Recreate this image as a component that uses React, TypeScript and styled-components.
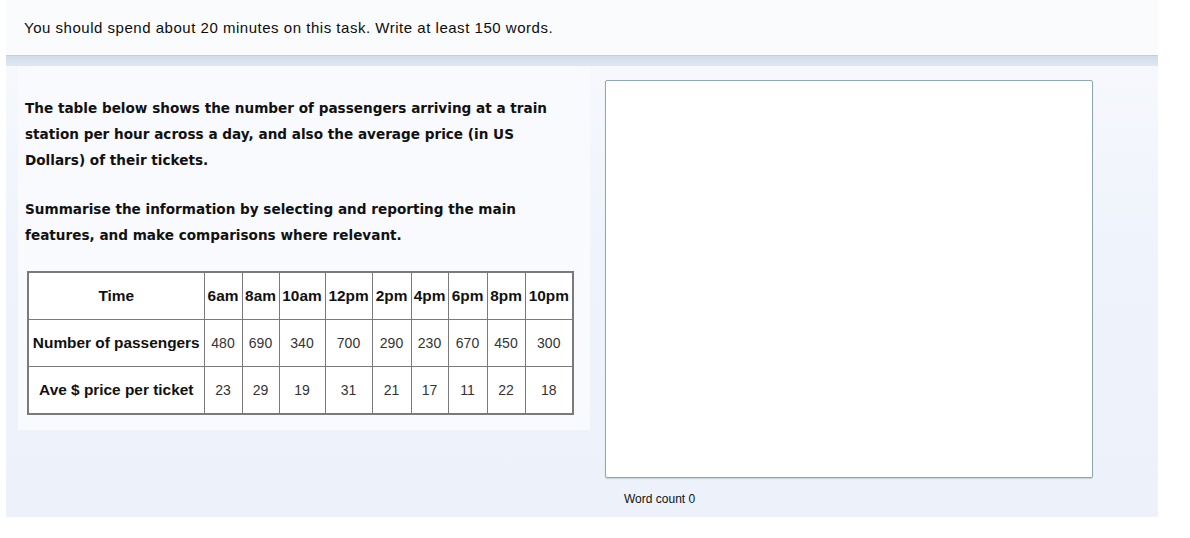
import React from "react";
import styled, { createGlobalStyle } from "styled-components";

const Global = createGlobalStyle`
  html, body { margin: 0; padding: 0; background: #ffffff; }
  body { font-family: "Liberation Sans", Arial, sans-serif; color: #111; }
`;

const Page = styled.div`
  width: 1152px;
  margin-left: 6px;
  display: flex;
  flex-direction: column;
`;

const Header = styled.div`
  height: 55px;
  display: flex;
  align-items: center;
  padding-left: 18px;
  background: #fafbfc;
  font-size: 15px;
  letter-spacing: 0.52px;
  color: #0d0d0d;
`;

const Divider = styled.div`
  height: 11px;
  box-sizing: border-box;
  border-top: 1px solid #c9ced6;
  background: linear-gradient(#d3dcea, #dfe7f4);
`;

const Main = styled.div`
  height: 451px;
  display: flex;
  align-items: flex-start;
  background: linear-gradient(#f6f8fd, #eff3fb 40%, #edf1fa);
`;

const LeftPanel = styled.div`
  margin-left: 12px;
  width: 558px;
  height: 335px;
  padding: 29px 7px 0;
  background: #f9fafd;
`;

const Para = styled.p`
  margin: 0 0 23px;
  max-width: 530px;
  font-family: "DejaVu Sans", Verdana, sans-serif;
  font-weight: bold;
  font-size: 13.6px;
  line-height: 26px;
  color: #111;
`;

const Table = styled.table`
  border-collapse: collapse;
  table-layout: fixed;
  width: 547px;
  background: #fff;
  margin-left: 2px;
  border: 2px solid #7a7a7a;
`;

const Cell = styled.td<{ $bold?: boolean }>`
  height: 46px;
  padding: 0;
  border: 1px solid #7a7a7a;
  text-align: center;
  font-size: ${(p) => (p.$bold ? "15.4px" : "14px")};
  font-weight: ${(p) => (p.$bold ? "bold" : "normal")};
  color: ${(p) => (p.$bold ? "#111" : "#333")};
  white-space: nowrap;
  overflow: visible;
`;

const RightPanel = styled.div`
  margin-left: 15px;
  display: flex;
  flex-direction: column;
`;

const TextArea = styled.div`
  margin-top: 14px;
  width: 486px;
  height: 396px;
  background: #fff;
  border: 1px solid #8fa9b1;
  border-radius: 2px;
  box-shadow: 0 1px 1px rgba(120, 150, 160, 0.35);
`;

const WordCount = styled.div`
  margin: 14px 0 0 19px;
  font-size: 12px;
  color: #111;
`;

const times = ["6am", "8am", "10am", "12pm", "2pm", "4pm", "6pm", "8pm", "10pm"];
const passengers = ["480", "690", "340", "700", "290", "230", "670", "450", "300"];
const prices = ["23", "29", "19", "31", "21", "17", "11", "22", "18"];
const widths = [176, 38, 37, 46, 47, 39, 37, 39, 38, 48];

export default function App() {
  return (
    <>
      <Global />
      <Page>
        <Header>You should spend about 20 minutes on this task. Write at least 150 words.</Header>
        <Divider />
        <Main>
          <LeftPanel>
            <Para>
              The table below shows the number of passengers arriving at a train station per hour across a day, and also the average price (in US Dollars) of their tickets.
            </Para>
            <Para>
              Summarise the information by selecting and reporting the main features, and make comparisons where relevant.
            </Para>
            <Table>
              <colgroup>
                {widths.map((w, i) => (
                  <col key={i} style={{ width: w }} />
                ))}
              </colgroup>
              <tbody>
                <tr>
                  <Cell $bold>Time</Cell>
                  {times.map((t) => (
                    <Cell key={t} $bold>{t}</Cell>
                  ))}
                </tr>
                <tr>
                  <Cell $bold>Number of passengers</Cell>
                  {passengers.map((v, i) => (
                    <Cell key={i}>{v}</Cell>
                  ))}
                </tr>
                <tr>
                  <Cell $bold>Ave $ price per ticket</Cell>
                  {prices.map((v, i) => (
                    <Cell key={i}>{v}</Cell>
                  ))}
                </tr>
              </tbody>
            </Table>
          </LeftPanel>
          <RightPanel>
            <TextArea />
            <WordCount>Word count 0</WordCount>
          </RightPanel>
        </Main>
      </Page>
    </>
  );
}
